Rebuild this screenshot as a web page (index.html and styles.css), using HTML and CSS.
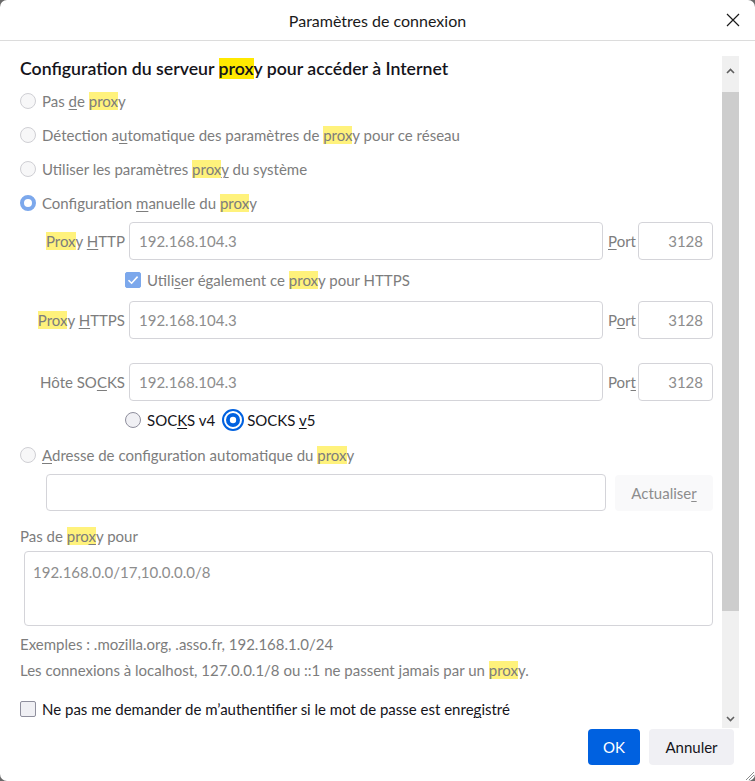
FILE: index.html
```html
<!DOCTYPE html>
<html lang="fr">
<head>
<meta charset="utf-8">
<title>Paramètres de connexion</title>
<link rel="stylesheet" href="styles.css">
</head>
<body>
<div class="dialog">
  <header class="titlebar">
    <span></span>
    <h1 class="title">Paramètres de connexion</h1>
    <button class="close" aria-label="Fermer">
      <svg width="14" height="14" viewBox="0 0 14 14"><path d="M1 1L13 13M13 1L1 13" stroke="#1a1a1a" stroke-width="1.2" fill="none"/></svg>
    </button>
  </header>

  <div class="body">
    <main class="content">
      <h2 class="heading">Configuration du serveur <mark class="hl-strong">prox</mark>y pour accéder à Internet</h2>

      <div class="radio-row dim"><span class="radio"></span><span>Pas <u>d</u>e <mark>prox</mark>y</span></div>
      <div class="radio-row dim"><span class="radio"></span><span>Détection a<u>u</u>tomatique des paramètres de <mark>prox</mark>y pour ce réseau</span></div>
      <div class="radio-row dim"><span class="radio"></span><span>Utiliser les paramètres <mark>prox</mark><u>y</u> du système</span></div>
      <div class="radio-row dim"><span class="radio checked"></span><span>Configuration <u>m</u>anuelle du <mark>prox</mark>y</span></div>

      <div class="field-grid first">
        <label class="flabel"><mark>Prox</mark>y <u>H</u>TTP</label>
        <div class="input">192.168.104.3</div>
        <label class="plabel"><u>P</u>ort</label>
        <div class="input port">3128</div>
      </div>

      <div class="check-row dim indent">
        <span class="checkbox checked"><svg width="12" height="12" viewBox="0 0 12 12"><path d="M1.5 6.2L4.6 9.2L10.6 2.6" stroke="#fff" stroke-width="1.6" fill="none"/></svg></span>
        <span>Utili<u>s</u>er également ce <mark>prox</mark>y pour HTTPS</span>
      </div>

      <div class="field-grid">
        <label class="flabel"><mark>Prox</mark>y <u>H</u>TTPS</label>
        <div class="input">192.168.104.3</div>
        <label class="plabel">P<u>o</u>rt</label>
        <div class="input port">3128</div>
      </div>

      <div class="field-grid socks">
        <label class="flabel">Hôte SO<u>C</u>KS</label>
        <div class="input">192.168.104.3</div>
        <label class="plabel">Por<u>t</u></label>
        <div class="input port">3128</div>
      </div>

      <div class="socks-row indent">
        <span class="radio plain"></span><span class="socks-label">SOC<u>K</u>S v4</span>
        <span class="radio-focus"><svg width="22" height="22" viewBox="0 0 22 22"><circle cx="11" cy="11" r="10" stroke="#0061e0" stroke-width="2" fill="none"/><circle cx="11" cy="11" r="7" fill="#0061e0"/><circle cx="11" cy="11" r="3.2" fill="#fff"/></svg></span><span class="socks-label">SOCKS <u>v</u>5</span>
      </div>

      <div class="radio-row dim auto"><span class="radio"></span><span><u>A</u>dresse de configuration automatique du <mark>prox</mark>y</span></div>

      <div class="auto-row">
        <div class="input auto-input"></div>
        <button class="btn-refresh">Actualise<u>r</u></button>
      </div>

      <div class="plain-label dim">Pas de <mark>pro<u>x</u></mark>y pour</div>
      <div class="textarea">192.168.0.0/17,10.0.0.0/8</div>
      <p class="note">Exemples : .mozilla.org, .asso.fr, 192.168.1.0/24</p>
      <p class="note second">Les connexions à localhost, 127.0.0.1/8 ou ::1 ne passent jamais par un <mark>prox</mark>y.</p>

      <div class="check-row dark last">
        <span class="checkbox"></span>
        <span>Ne pas me demander de m’authentifier si le mot de passe est enre<u>g</u>istré</span>
      </div>
    </main>

    <div class="scrollbar">
      <div class="sb-arrow"><svg width="9" height="6" viewBox="0 0 9 6"><path d="M1 5L4.5 1.5L8 5" stroke="#606060" stroke-width="1.6" fill="none"/></svg></div>
      <div class="sb-thumb"></div>
      <div class="sb-rest"></div>
      <div class="sb-arrow down"><svg width="9" height="6" viewBox="0 0 9 6"><path d="M1 1L4.5 4.5L8 1" stroke="#606060" stroke-width="1.6" fill="none"/></svg></div>
    </div>
  </div>

  <footer class="footer">
    <button class="btn primary">OK</button>
    <button class="btn secondary">Annuler</button>
  </footer>
  <svg class="grip" width="12" height="12" viewBox="0 0 12 12"><path d="M11 3L3 11M11 6L6 11M11 9L9 11" stroke="#8a8a8a" stroke-width="1" fill="none"/></svg>
</div>
</body>
</html>
```

FILE: styles.css
```css
* { box-sizing: border-box; }
html, body { margin: 0; padding: 0; }
body {
  background: #6a6a6a;
  font-family: "Lato", "Noto Sans", sans-serif;
  font-size: 15px;
  color: #15141a;
}
.dialog {
  position: relative;
  width: 755px;
  height: 781px;
  background: #fff;
  border-radius: 7px;
  overflow: hidden;
  display: flex;
  flex-direction: column;
}
mark { background: #fff27c; color: inherit; }
mark.hl-strong { background: #ffe900; }
u { text-decoration-thickness: 1px; text-underline-offset: 2px; }

.titlebar {
  height: 41px;
  flex: none;
  border-bottom: 1px solid #dcdcdc;
  display: grid;
  grid-template-columns: 1fr auto 1fr;
  align-items: center;
}
.title {
  margin: 0;
  font-size: 16px;
  font-weight: 400;
  color: #1a1a1a;
}
.close {
  justify-self: end;
  margin-right: 14px;
  width: 16px;
  height: 16px;
  border: 0;
  background: none;
  padding: 0;
  display: flex;
  align-items: center;
  justify-content: center;
}

.body {
  flex: none;
  height: 687px;
  display: flex;
}
.content {
  flex: 1;
  overflow: hidden;
  padding: 16px 9px 0 20px;
}
.scrollbar {
  width: 17px;
  margin: 15px 16px 0 0;
  background: #f0f0f0;
  display: flex;
  flex-direction: column;
}
.sb-arrow {
  height: 36px;
  display: flex;
  justify-content: center;
  padding-top: 12px;
}
.sb-arrow.down { height: 16px; padding-top: 4px; }
.sb-thumb { height: 519px; background: #cdcdcd; }
.sb-rest { flex: 1; }

.heading {
  margin: 0 0 3px;
  font-size: 17.7px;
  line-height: 24px;
  font-weight: 600;
  color: #15141a;
}
.dim { color: #7d7d7d; }
.dark { color: #15141a; }

.radio-row {
  height: 34px;
  display: flex;
  align-items: center;
  gap: 6px;
}
.radio {
  width: 16px;
  height: 16px;
  border-radius: 50%;
  border: 1px solid #cfcfd4;
  background: #f7f7f8;
  flex: none;
}
.radio.checked {
  border: 4px solid #7ca8ec;
  background: #fff;
}
.radio.plain {
  border-color: #8f8f9d;
  background: #f0f0f4;
}

.field-grid {
  display: grid;
  grid-template-columns: 105px 474px auto 75px;
  column-gap: 4px;
  align-items: center;
}
.field-grid.first { margin-top: 2px; }
.field-grid.socks { margin-top: 24px; }
.flabel { text-align: right; color: #7d7d7d; }
.plabel { color: #7d7d7d; margin-left: 1px; margin-right: -2px; }
.input {
  height: 38px;
  border: 1px solid #d4d4d9;
  border-radius: 4px;
  padding: 0 9px;
  display: flex;
  align-items: center;
  color: #8d8d8d;
}
.input.port { justify-content: flex-end; }

.indent { padding-left: 105px; }
.check-row {
  height: 40px;
  display: flex;
  align-items: center;
  gap: 6px;
}
.checkbox {
  width: 16px;
  height: 16px;
  border-radius: 2px;
  border: 1px solid #8f8f9d;
  background: #f0f0f4;
  flex: none;
  display: flex;
  align-items: center;
  justify-content: center;
}
.checkbox.checked { background: #7ca8ec; border-color: #7ca8ec; }
.check-row.indent + .field-grid { margin-top: 1px; }

.socks-row {
  height: 36px;
  margin-top: 1px;
  display: flex;
  align-items: center;
}
.socks-label { margin-left: 6px; color: #15141a; }
.radio-focus {
  display: flex;
  margin-left: 7px;
  margin-right: -3px;
}

.radio-row.auto { height: 33px; }
.auto-row {
  margin: 3px 0 0 26px;
  display: flex;
  gap: 9px;
  align-items: center;
}
.auto-input { flex: 1; height: 37px; }
.btn-refresh {
  width: 98px;
  height: 36px;
  border: 0;
  border-radius: 4px;
  background: #f9f9fa;
  color: #8d8d8d;
  font: inherit;
}

.plain-label {
  margin-top: 15px;
  line-height: 20px;
}
.textarea {
  margin: 5px 0 0 4px;
  height: 75px;
  border: 1px solid #d4d4d9;
  border-radius: 4px;
  padding: 10px 8px;
  color: #8d8d8d;
  line-height: 20px;
}
.note {
  margin: 8px 0 0;
  line-height: 20px;
  color: #7d7d7d;
}
.note.second { margin-top: 6px; }
.check-row.last { margin-top: 19px; height: 20px; }

.footer {
  flex: 1;
  display: flex;
  justify-content: flex-end;
  gap: 9px;
  padding: 1px 21px 0 0;
}
.btn {
  height: 36px;
  border: 0;
  border-radius: 4px;
  font: inherit;
  font-size: 15px;
  padding: 0 16px;
}
.btn.primary { background: #0061e0; color: #fff; width: 52px; padding: 0; }
.btn.secondary { background: #f0f0f4; color: #15141a; width: 85px; padding: 0; }
.grip { position: absolute; right: 0; bottom: 0; }
```
